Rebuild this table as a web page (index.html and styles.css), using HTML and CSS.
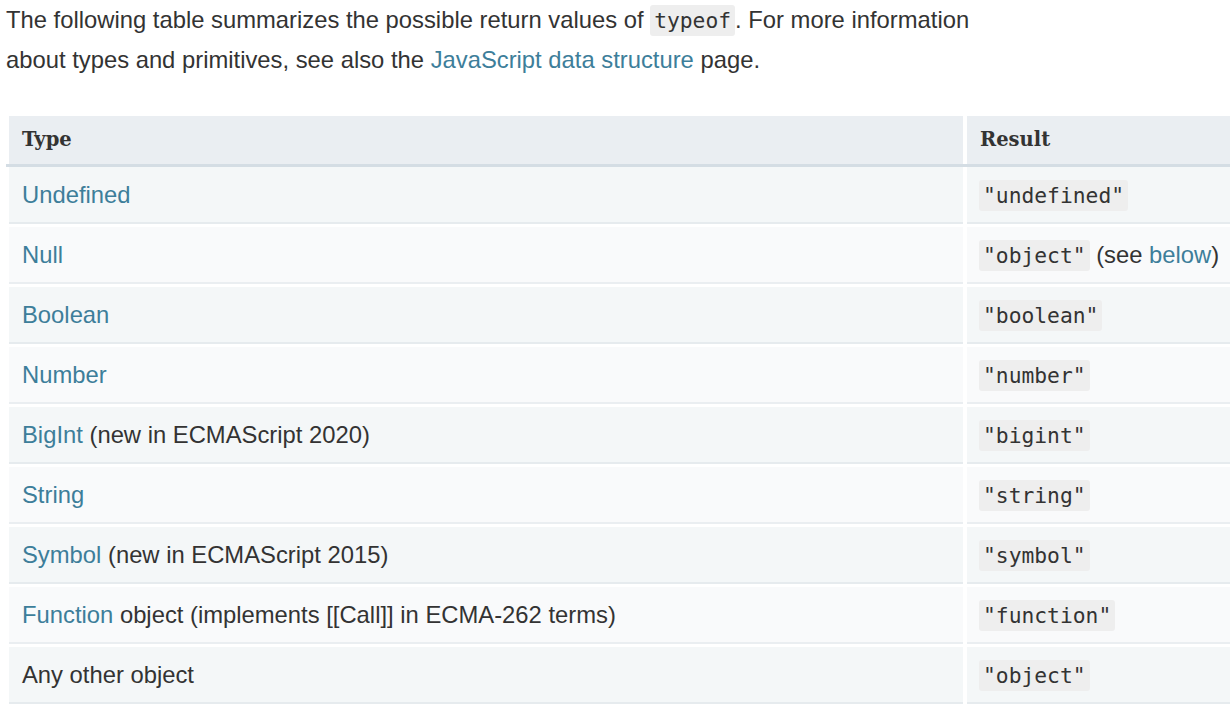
FILE: index.html
```html
<!DOCTYPE html>
<html lang="en">
<head>
<meta charset="utf-8">
<title>typeof</title>
<link rel="stylesheet" href="styles.css">
</head>
<body>
<main class="page">
  <p class="intro">The following table summarizes the possible return values of <code class="code">typeof</code>. For more information about types and primitives, see also the <a class="link" href="#">JavaScript data structure</a> page.</p>
  <div class="table" role="table">
    <div class="thead" role="row">
      <div class="th" role="columnheader">Type</div>
      <div class="th" role="columnheader">Result</div>
    </div>
    <div class="tbody">
      <div class="tr" role="row"><div class="td"><a class="link" href="#">Undefined</a></div><div class="td"><code class="code">"undefined"</code></div></div>
      <div class="tr" role="row"><div class="td"><a class="link" href="#">Null</a></div><div class="td"><code class="code">"object"</code> (see <a class="link" href="#">below</a>)</div></div>
      <div class="tr" role="row"><div class="td"><a class="link" href="#">Boolean</a></div><div class="td"><code class="code">"boolean"</code></div></div>
      <div class="tr" role="row"><div class="td"><a class="link" href="#">Number</a></div><div class="td"><code class="code">"number"</code></div></div>
      <div class="tr" role="row"><div class="td"><a class="link" href="#">BigInt</a> (new in ECMAScript 2020)</div><div class="td"><code class="code">"bigint"</code></div></div>
      <div class="tr" role="row"><div class="td"><a class="link" href="#">String</a></div><div class="td"><code class="code">"string"</code></div></div>
      <div class="tr" role="row"><div class="td"><a class="link" href="#">Symbol</a> (new in ECMAScript 2015)</div><div class="td"><code class="code">"symbol"</code></div></div>
      <div class="tr" role="row"><div class="td"><a class="link" href="#">Function</a> object (implements [[Call]] in ECMA-262 terms)</div><div class="td"><code class="code">"function"</code></div></div>
      <div class="tr" role="row"><div class="td">Any other object</div><div class="td"><code class="code">"object"</code></div></div>
    </div>
  </div>
</main>
</body>
</html>
```
FILE: styles.css
```css
html, body {
  margin: 0;
  padding: 0;
  background: #fff;
}
body {
  font-family: "Liberation Sans", Arial, sans-serif;
  font-size: 23.8px;
  color: #333;
  overflow: hidden;
}
.page {
  padding: 0 0 0 6px;
  width: 1300px;
}
.intro {
  margin: 0;
  line-height: 39px;
  width: 1000px;
}
.link {
  color: #3d7e9a;
  text-decoration: none;
}
.code {
  font-family: "DejaVu Sans Mono", monospace;
  font-size: 21.3px;
  background: #eee;
  border-radius: 3px;
  padding: 3px 4px;
}
.table {
  margin-top: 37px;
  display: flex;
  flex-direction: column;
}
.thead, .tr {
  display: grid;
  grid-template-columns: 954px 1fr;
  column-gap: 4px;
  padding-left: 3px;
}
.thead {
  border-bottom: 3px solid #d4dde4;
}
.th {
  background: #eaeef2;
  height: 48px;
  line-height: 48px;
  padding-left: 13px;
  font-family: "DejaVu Serif", serif;
  font-weight: bold;
  font-size: 19.5px;
  color: #333;
}
.tbody {
  display: flex;
  flex-direction: column;
  row-gap: 3px;
}
.td {
  background: #f4f7f8;
  border-bottom: 2px solid #e6ebee;
  height: 55px;
  line-height: 56px;
  padding-left: 13px;
  white-space: nowrap;
}
.td + .td {
  padding-left: 12px;
}
.tr:nth-child(even) .td {
  background: #f9fafb;
  border-bottom-color: #eaeef1;
}
```
